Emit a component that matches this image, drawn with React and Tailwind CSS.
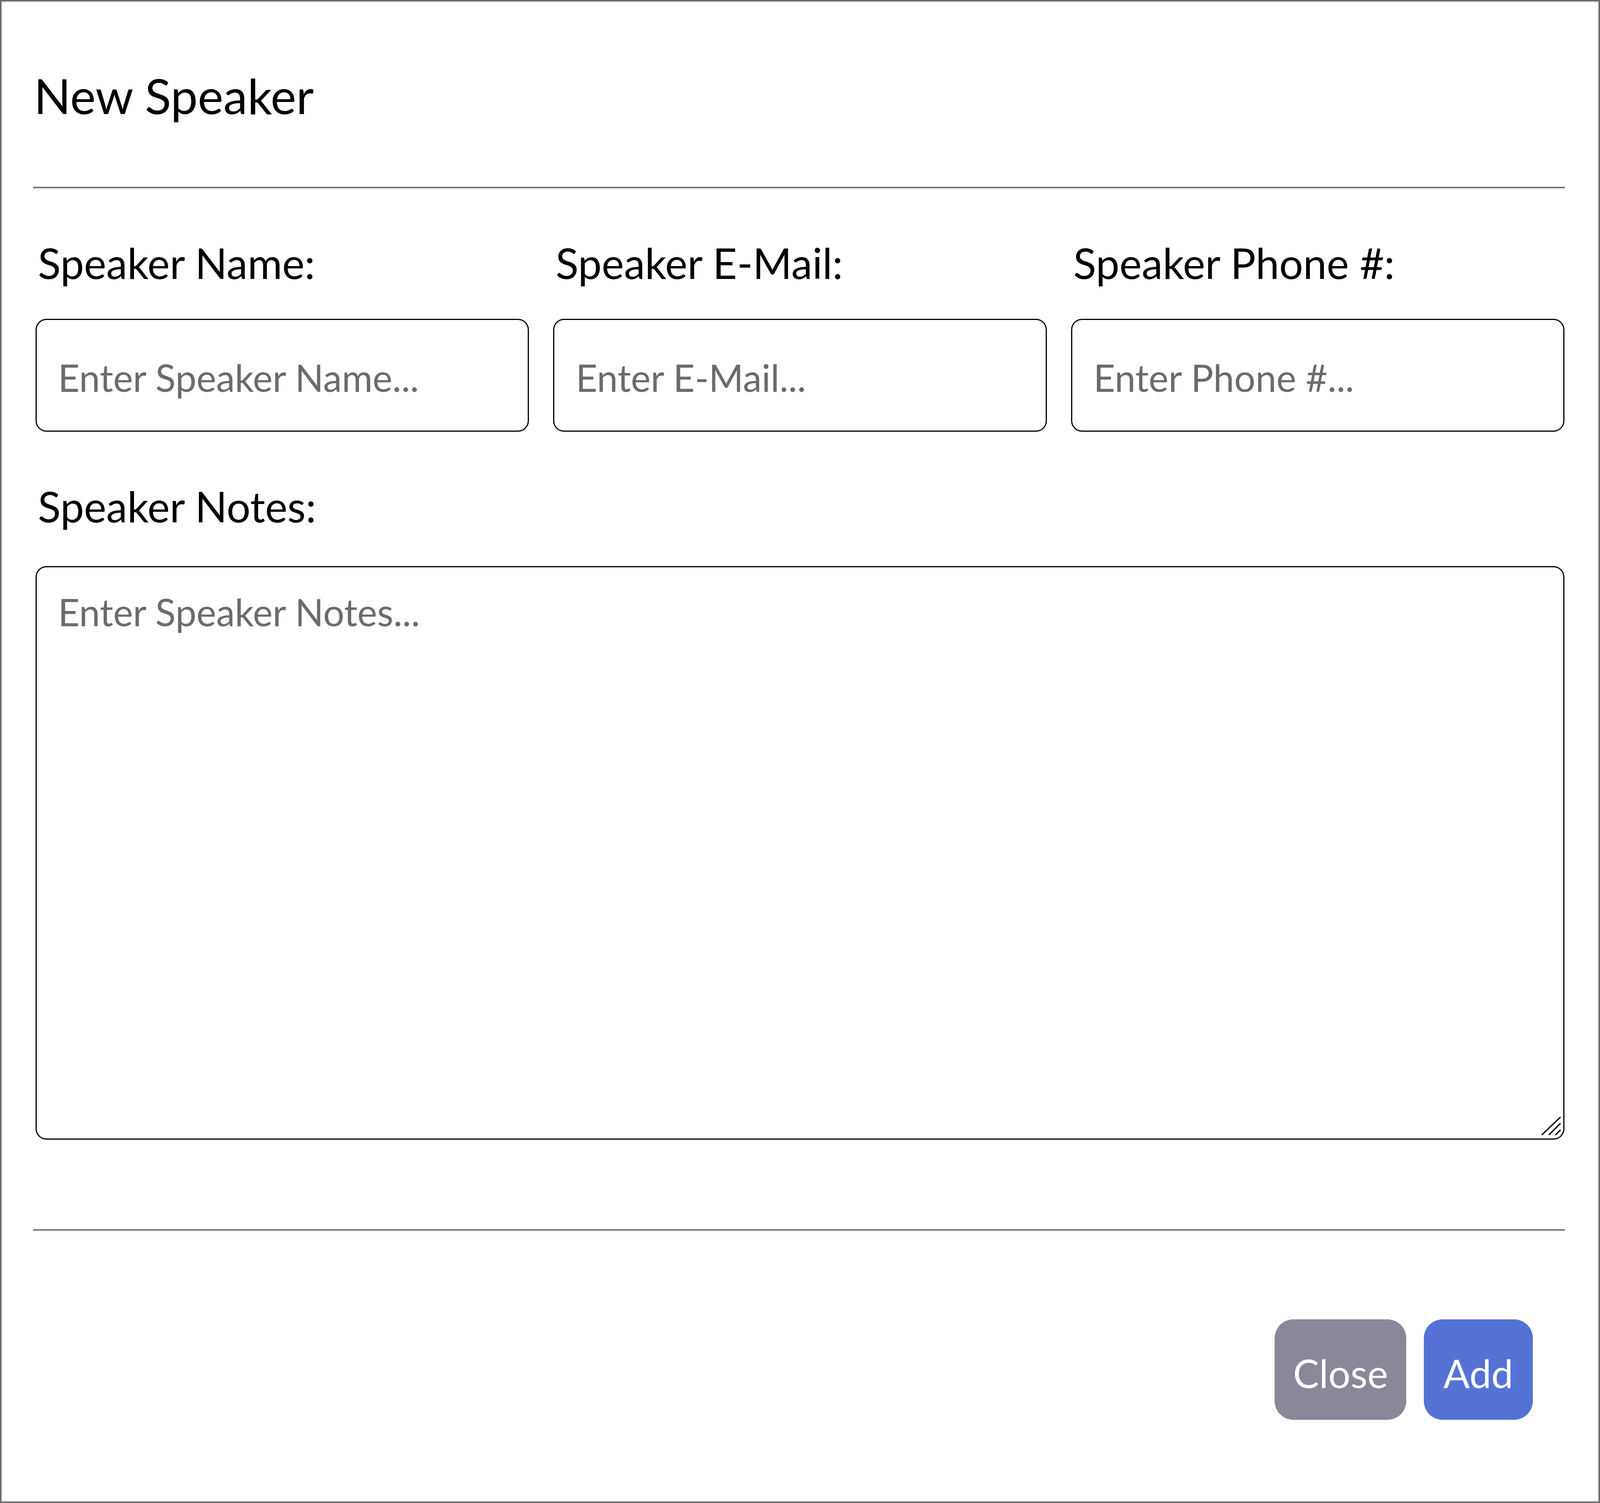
import { useState } from 'react';

const FIELDS = [
  { id: 'name', label: 'Speaker Name:', placeholder: 'Enter Speaker Name...', type: 'text' },
  { id: 'email', label: 'Speaker E-Mail:', placeholder: 'Enter E-Mail...', type: 'email' },
  { id: 'phone', label: 'Speaker Phone #:', placeholder: 'Enter Phone #...', type: 'tel' },
];

const fieldClass =
  'box-border w-full rounded-[28px] border-[3px] border-black bg-white pl-[1.33vw] text-[96px] leading-[1.2] outline-none placeholder:text-[#6b6b6b]';

function ResizeGrip() {
  return (
    <svg
      className="pointer-events-none absolute bottom-[10px] right-[8px]"
      width="52"
      height="50"
      viewBox="0 0 52 50"
      fill="none"
      stroke="#000"
      strokeWidth="3.4"
      strokeLinecap="round"
    >
      <line x1="3" y1="47" x2="49" y2="3" />
      <line x1="21" y1="47" x2="49" y2="19" />
      <line x1="38" y1="47" x2="49" y2="36" />
    </svg>
  );
}

export default function App() {
  const [form, setForm] = useState({ name: '', email: '', phone: '', notes: '' });

  const update = (key) => (e) => setForm((f) => ({ ...f, [key]: e.target.value }));

  return (
    <div className="box-border flex h-[3847px] w-full overflow-hidden border-[4px] border-[#6e6e6e] bg-white font-['Lato','Open_Sans',sans-serif] text-black">
      <div className="ml-[1.97vw] mr-[2.1vw] min-w-0 flex-1">
        {/* Header */}
        <div className="border-b-[4px] border-[#777777] pb-[159px] pl-[2px] pt-[166px]">
          <h1 className="text-[124px] font-normal leading-[1.2]">New Speaker</h1>
        </div>

        {/* Body */}
        <div className="pb-[229px] pl-[0.155vw] pr-[1px] pt-[126px]">
          <div className="grid grid-cols-3 gap-x-[1.52vw]">
            {FIELDS.map((field) => (
              <label key={field.id} className="flex min-w-0 flex-col">
                <span className="whitespace-nowrap pl-[6px] text-[108px] leading-[1.2]">{field.label}</span>
                <input
                  type={field.type}
                  value={form[field.id]}
                  onChange={update(field.id)}
                  placeholder={field.placeholder}
                  className={`mt-[79px] h-[289px] pt-[10px] ${fieldClass}`}
                />
              </label>
            ))}
          </div>

          <label className="mt-[126px] flex flex-col">
            <span className="pl-[6px] text-[108px] leading-[1.2]">Speaker Notes:</span>
            <div className="relative mt-[88px]">
              <textarea
                value={form.notes}
                onChange={update('notes')}
                placeholder="Enter Speaker Notes..."
                className={`block h-[1468px] resize-none pt-[56px] ${fieldClass}`}
              />
              <ResizeGrip />
            </div>
          </label>
        </div>

        {/* Footer */}
        <div className="flex justify-end gap-[1.09vw] border-t-[4px] border-[#777777] pr-[2vw] pt-[227px]">
          <button
            type="button"
            className="flex h-[257px] w-[8.22vw] items-center justify-center whitespace-nowrap rounded-[48px] bg-[#898798] pt-[18px] text-[100px] leading-[1.2] text-white"
          >
            Close
          </button>
          <button
            type="button"
            className="flex h-[257px] w-[6.82vw] items-center justify-center whitespace-nowrap rounded-[48px] bg-[#5573d5] pt-[18px] text-[100px] leading-[1.2] text-white"
          >
            Add
          </button>
        </div>
      </div>
    </div>
  );
}
